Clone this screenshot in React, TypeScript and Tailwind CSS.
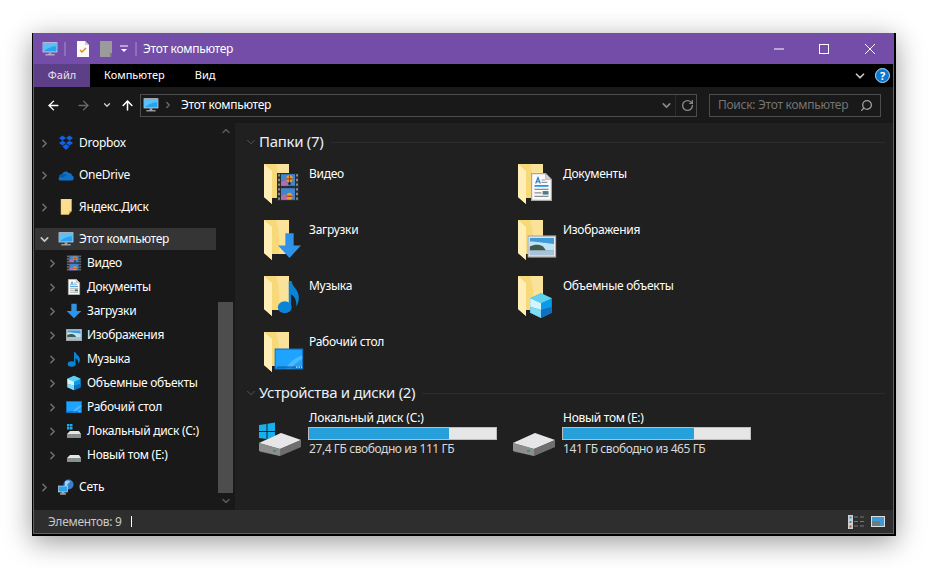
import type { ReactNode } from 'react'
import { ArrowLeft, ArrowRight, ArrowUp, ChevronDown, ChevronRight, ChevronUp, RotateCw, Search } from 'lucide-react'

type Glyph = 'film' | 'doc' | 'down' | 'pic' | 'note' | 'cube' | 'desk' | 'pc'

function glyph(name: Glyph): ReactNode {
  switch (name) {
    case 'film':
      return (
        <>
          <rect x="1" y="0" width="22" height="24" fill="#2b2b2b" />
          <path d="M2 1h2v2H2zM2 5h2v2H2zM2 9h2v2H2zM2 13h2v2H2zM2 17h2v2H2zM2 21h2v2H2zM20 1h2v2h-2zM20 5h2v2h-2zM20 9h2v2h-2zM20 13h2v2h-2zM20 17h2v2h-2zM20 21h2v2h-2z" fill="#8a8a8a" />
          <rect x="5" y="1" width="14" height="10" fill="#3f86cf" />
          <rect x="5" y="13" width="14" height="10" fill="#3f86cf" />
          <path d="M5 8l4-2 3 3v2H5zM5 20l4-2 3 3v2H5z" fill="#b56bb0" />
          <circle cx="13.5" cy="5" r="3.2" fill="#e8a020" />
          <path d="M10.5 5h6M13.5 2v6" stroke="#b3321e" strokeWidth="1" />
          <rect x="12.5" y="8" width="2" height="2" fill="#111" />
          <circle cx="13.5" cy="20" r="3" fill="#e8a020" />
          <path d="M10.5 20h6" stroke="#b3321e" strokeWidth="1" />
        </>
      )
    case 'doc':
      return (
        <>
          <path d="M3.5 0.5h12l5 5v18h-17z" fill="#fafafa" stroke="#a8a8a8" />
          <path d="M15.5 0.5v5h5z" fill="#d5d5d5" stroke="#a8a8a8" strokeWidth="0.6" />
          <path d="M7 9l2-5 2 5M8 7.5h2" stroke="#1f7ad0" strokeWidth="1" fill="none" />
          <path d="M12 6h3M12 8h5" stroke="#9a9a9a" strokeWidth="1" />
          <path d="M6 11h12" stroke="#1e96e6" strokeWidth="1.4" />
          <path d="M6 14h12M6 17h6M6 20h12" stroke="#8d8d8d" strokeWidth="1" />
          <rect x="13" y="15.5" width="5" height="3" fill="#4d7a8c" />
        </>
      )
    case 'down':
      return <path d="M8 1h8v11h7L12 23 1 12h7z" fill="#2f93e8" />
    case 'pic':
      return (
        <>
          <rect x="0.5" y="3.5" width="23" height="17" fill="#eee" stroke="#a8a8a8" />
          <rect x="2" y="5" width="20" height="14" fill="#3f9bd8" />
          <path d="M2 8c6 0 10 1 20 2v5H2z" fill="#bfe3f2" />
          <path d="M2 12c4-2 8-2 11 0l3 4H2z" fill="#3e5a4e" />
          <path d="M2 15h20v4H2z" fill="#a9c2d8" />
        </>
      )
    case 'note':
      return (
        <>
          <ellipse cx="8.5" cy="19.5" rx="6" ry="4" fill="#0a84d6" />
          <path d="M12 2h2.4c0.6 4 6.4 5.500 6.400 11 0 2.500-1 4.500-2.300 6 0.600-4-1.500-7-4.500-8v9h-2z" fill="#0a84d6" />
        </>
      )
    case 'cube':
      return (
        <>
          <path d="M12 1l10 4.500v13L12 23 2 18.500v-13z" fill="#0a9be8" />
          <path d="M12 1l10 4.500L12 10 2 5.500z" fill="#5fd0ee" />
          <path d="M2 5.500L12 10v6L2 13z" fill="#d6f4fb" />
          <path d="M2 13l10 3v7L2 18.500z" fill="#7fdcf2" />
          <path d="M12 16l10-3v5.500L12 23z" fill="#0f6fc0" />
        </>
      )
    case 'desk':
      return (
        <>
          <rect x="0.5" y="3.500" width="23" height="17" fill="#1ea4ff" stroke="#146fc0" />
          <path d="M10 20c3-6 7-9 13-11v3c-4 2-7 5-9 8z" fill="#4db8ff" />
          <path d="M2 19h20" stroke="#0e5fa8" />
          <path d="M18 19h1M20 19h1M22 19h.6" stroke="#fff" />
        </>
      )
    case 'pc':
      return (
        <>
          <rect x="1" y="2" width="22" height="15" fill="#d8eefb" />
          <rect x="2" y="3" width="20" height="13" fill="#29a3ef" />
          <path d="M2 3h20v5c-8 0-14 3-20 8z" fill="#5cc0f7" />
          <rect x="10" y="17" width="4" height="3" fill="#8fb0c4" />
          <rect x="5" y="20" width="14" height="1.500" fill="#d0d0d0" />
        </>
      )
  }
}

function Small({ name }: { name: Glyph }) {
  return (
    <svg viewBox="0 0 24 24" className="w-4 h-4 shrink-0">
      {glyph(name)}
    </svg>
  )
}

// where each overlay sits on the big folder: x, y, w, h
const overlayBox: Record<string, [number, number, number, number]> = {
  film: [12, 11, 24, 28],
  doc: [9.5, 11, 28, 28],
  down: [13, 14, 25, 27],
  pic: [9.4, 13.7, 29, 29.6],
  note: [11, 4, 27.5, 36],
  cube: [10, 18, 26, 27],
  desk: [10.4, 15, 29, 28],
}

function FolderIcon({ name }: { name: Glyph }) {
  const [x, y, w, h] = overlayBox[name]
  return (
    <svg viewBox="0 0 40 44" className="w-10 h-11 shrink-0">
      <path d="M0 2h25v34H8v6l-8-7z" fill="#f7d979" />
      <path d="M8 9L0 2v33l8 7z" fill="#ffeeb5" />
      <path d="M12 2c3 10 4 20 3 34h10V2z" fill="#fbe29a" />
      <svg x={x} y={y} width={w} height={h} viewBox="0 0 24 24" preserveAspectRatio="none">
        {glyph(name)}
      </svg>
    </svg>
  )
}

function Drive({ win }: { win?: boolean }) {
  return (
    <svg viewBox="0 0 44 34" className="w-11 h-[34px] shrink-0 mt-3">
      {win && <path d="M0 3l7.500-1v7H0zM8.500 1.800L16 0.500V9H8.500zM0 10h7.500v7L0 16zM8.500 10H16v8.500l-7.500-1.200z" fill="#16b0ee" />}
      <path d="M0 21l22-10 20 7v7L21 34 1 30z" fill="#4a4a4a" />
      <path d="M0 21l22-10 20 7-21 9z" fill="#e6e6e8" />
      <path d="M0 21l21 6v7L0 29z" fill="#8e8e8e" />
      <path d="M21 27l21-9v7L21 34z" fill="#6e6e6e" />
      <rect x="14" y="28" width="3" height="2" fill="#1ea55a" />
    </svg>
  )
}

function SmallDrive({ win }: { win?: boolean }) {
  return (
    <svg viewBox="0 0 16 16" className="w-4 h-4 shrink-0">
      {win && <path d="M1 1h2.500v2.500H1zM4 1h2.500v2.500H4zM1 4h2.500v2.500H1zM4 4h2.500v2.500H4z" fill="#16b0ee" />}
      <path d="M1 11l3-3h9l2 3v4H1z" fill="#e6e6e6" />
      <path d="M1 11h14v4H1z" fill="#8d8d8d" />
      <rect x="10" y="12.500" width="2" height="1" fill="#35d07a" />
    </svg>
  )
}

function Dropbox() {
  return (
    <svg viewBox="0 0 16 16" className="w-4 h-4 shrink-0">
      <path d="M4.500 0.500L8 3 4.500 5.500 1 3zM11.500 0.500L15 3l-3.500 2.500L8 3zM4.500 5.500L8 8 4.500 10.500 1 8zM11.500 5.500L15 8l-3.500 2.500L8 8zM4.500 11.500L8 9l3.500 2.500L8 15z" fill="#0f62e6" />
    </svg>
  )
}

function OneDrive() {
  return (
    <svg viewBox="0 0 16 16" className="w-4 h-4 shrink-0">
      <path d="M2.500 13.500C0.500 13.500 0 11 1.500 10c-0.500-2 1.500-3 2.500-2.500C5 4.500 8.500 3.500 10.500 6c2-0.500 3.500 1 3.500 2.500 1.500 0.500 2 2.500 1.500 3.500-0.300 1-1 1.500-2 1.500z" fill="#0f72c8" />
      <path d="M1.500 10c-0.500-2 1.500-3 2.500-2.500 1.500-1 4-1 5.500 1.500-2-0.500-3 0-3.500 1.500-1.500-0.500-3.500 0-4.500-0.500z" fill="#0a5aa5" />
    </svg>
  )
}

function YandexFolder() {
  return (
    <svg viewBox="0 0 16 16" className="w-4 h-4 shrink-0">
      <path d="M3 0h10.500v12L11 14.500v1H3z" fill="#fbdf8d" stroke="#e9c265" strokeWidth="0.5" />
      <path d="M11 12h2.500L11 15z" fill="#d9b45c" />
    </svg>
  )
}

function Network() {
  return (
    <svg viewBox="0 0 16 16" className="w-4 h-4 shrink-0">
      <circle cx="10.500" cy="5.500" r="5" fill="#3f7fc8" />
      <path d="M7 2.500c2-1.500 4-1 5 0-1 2-3 2-2.500 4L7 7z" fill="#9fd0f0" />
      <rect x="0.500" y="7" width="9" height="6" fill="#29a3ef" stroke="#d8eefb" strokeWidth="0.6" />
      <rect x="3.500" y="13" width="3" height="1.500" fill="#8fb0c4" />
      <rect x="2" y="14.500" width="6" height="1" fill="#ddd" />
    </svg>
  )
}

function Row({ icon, label, child, open, active, tall }: { icon: ReactNode; label: string; child?: boolean; open?: boolean; active?: boolean; tall?: boolean }) {
  const Arrow = open ? ChevronDown : ChevronRight
  return (
    <div className={`flex items-center pr-[2px] ${tall ? 'h-[32px]' : 'h-6'} ${child ? 'pl-[9px]' : 'pl-px'}`}>
      <div className={`flex items-center w-full h-[22px] ${active ? 'bg-[#353535]' : ''}`}>
        <span className="w-[23px] pl-[3px] flex shrink-0">
          <Arrow size={13} strokeWidth={3} className={open ? 'text-[#c8c8c8]' : 'text-[#6e6e6e]'} />
        </span>
        {icon}
        <span className="ml-[5px] text-[12px] text-white whitespace-nowrap">{label}</span>
      </div>
    </div>
  )
}

function Section({ title }: { title: string }) {
  return (
    <div className="flex items-center h-5">
      <ChevronDown size={14} strokeWidth={1.5} className="text-[#5a5a5a] w-[14px] -ml-px" />
      <span className="ml-px -mt-[2px] text-[15px] tracking-[-0.3px] text-[#e6f0fa] whitespace-nowrap">{title}</span>
      <div className="ml-[7px] flex-1 h-px bg-[#2c2c2c]" />
    </div>
  )
}

const folders: [string, Glyph][] = [
  ['Видео', 'film'],
  ['Документы', 'doc'],
  ['Загрузки', 'down'],
  ['Изображения', 'pic'],
  ['Музыка', 'note'],
  ['Объемные объекты', 'cube'],
  ['Рабочий стол', 'desk'],
]

export default function App() {
  return (
    <div className="w-[928px] h-[568px] bg-white pt-[33px] pl-[32px] overflow-hidden tracking-[-0.28px] font-['Noto_Sans','Open_Sans',sans-serif]">
      <div className="w-[864px] h-[503px] bg-black pl-px pr-[2px] pb-[2px] shadow-[0_6px_26px_rgba(0,0,0,0.4)]">
        <div className="h-full border border-t-0 border-[#744da9] flex flex-col">
          {/* title bar */}
          <div className="h-[31px] bg-[#744da9] flex items-center shrink-0 -mx-px pl-[9px]">
            <Small name="pc" />
            <div className="w-[2px] h-[14px] bg-[#8d70b8] ml-[6px]" />
            <svg viewBox="0 0 14 16" className="w-[14px] h-4 ml-[10px]">
              <path d="M1 0h8l4 4v12H1z" fill="#fafafa" />
              <path d="M9 0v4h4z" fill="#ccc" />
              <path d="M4 9l2 2 4-4" stroke="#e8801e" strokeWidth="1.300" fill="none" />
            </svg>
            <svg viewBox="0 0 12 16" className="w-3 h-4 ml-[10px]">
              <path d="M0 0h12v16H0z" fill="#9b9b9b" />
              <path d="M10 12h2v4h-2z" fill="#777" />
            </svg>
            <svg viewBox="0 0 8 8" className="w-2 h-2 ml-[8px]">
              <path d="M0 1h8" stroke="#fff" />
              <path d="M1 4h6L4 7z" fill="#fff" />
            </svg>
            <div className="w-[2px] h-[14px] bg-[#8d70b8] ml-[7px]" />
            <span className="ml-[6px] text-[12px] text-white">Этот компьютер</span>
            <div className="flex-1" />
            <svg viewBox="0 0 10 10" className="w-[10px] h-[10px] mr-[35px] mt-px">
              <path d="M0 5h10" stroke="#fff" />
            </svg>
            <svg viewBox="0 0 10 10" className="w-[10px] h-[10px] mr-[36px]">
              <rect x="0.500" y="0.500" width="9" height="9" fill="none" stroke="#fff" />
            </svg>
            <svg viewBox="0 0 10 10" className="w-[10px] h-[10px] mr-[19px]">
              <path d="M0 0l10 10M10 0L0 10" stroke="#fff" />
            </svg>
          </div>
          {/* ribbon tabs */}
          <div className="h-[23px] bg-black flex items-center shrink-0 text-[11px] tracking-normal text-white">
            <div className="w-[56px] h-full bg-[#5d3f88] flex items-center justify-center text-[#e8e0f2]">Файл</div>
            <span className="ml-[14px]">Компьютер</span>
            <span className="ml-[30px]">Вид</span>
            <div className="flex-1" />
            <ChevronDown size={14} strokeWidth={3} className="text-[#c8c8c8] mr-[8px]" />
            <div className="w-[15px] h-[15px] mr-[3px] rounded-full bg-[#0a78d0] border border-[#b9dcf5] flex items-center justify-center text-[11px] font-bold text-white leading-none">?</div>
          </div>
          {/* address row */}
          <div className="h-[36px] bg-[#191919] flex items-center shrink-0 pl-[12px] text-[12px]">
            <ArrowLeft size={15} strokeWidth={2.2} className="text-white shrink-0" />
            <ArrowRight size={15} strokeWidth={2.2} className="text-[#6a6a6a] ml-[15px] shrink-0" />
            <ChevronDown size={10} strokeWidth={3} className="text-[#d0d0d0] ml-[11px] shrink-0" />
            <ArrowUp size={15} strokeWidth={2.4} className="text-white ml-[8px] shrink-0" />
            <div className="w-[557px] h-[23px] ml-[5px] border border-[#4d4d4d] flex items-center pl-[2px] shrink-0">
              <Small name="pc" />
              <ChevronRight size={10} strokeWidth={3} className="text-[#6e6e6e] ml-[4px]" />
              <span className="ml-[8px] text-white">Этот компьютер</span>
              <div className="flex-1" />
              <ChevronDown size={13} strokeWidth={3} className="text-[#8a8a8a] mr-[2px]" />
              <div className="w-px h-full bg-[#2c2c2c]" />
              <RotateCw size={13} strokeWidth={2.4} className="text-[#8a8a8a] ml-[5px] mr-[2px]" />
            </div>
            <div className="w-[172px] h-[23px] ml-[12px] border border-[#4d4d4d] flex items-center pl-[8px] pr-[7px] text-[#757575] shrink-0">
              <span className="whitespace-nowrap">Поиск: Этот компьютер</span>
              <div className="flex-1" />
              <Search size={13} strokeWidth={2.4} className="text-[#a0a0a0] -scale-x-100" />
            </div>
          </div>
          {/* body */}
          <div className="flex-1 flex min-h-0">
            <div className="w-[201px] bg-[#191919] flex shrink-0">
              <div className="w-[184px] pt-1 shrink-0">
                <Row tall icon={<Dropbox />} label="Dropbox" />
                <Row tall icon={<OneDrive />} label="OneDrive" />
                <Row tall icon={<YandexFolder />} label="Яндекс.Диск" />
                <div className="h-[28px] flex items-end">
                  <div className="w-full">
                    <Row open active icon={<Small name="pc" />} label="Этот компьютер" />
                  </div>
                </div>
                {folders.map(([label, g]) => (
                  <Row key={label} child icon={<Small name={g} />} label={label} />
                ))}
                <Row child icon={<SmallDrive win />} label="Локальный диск (C:)" />
                <Row child icon={<SmallDrive />} label="Новый том (E:)" />
                <div className="h-[32px] flex items-end">
                  <div className="w-full">
                    <Row icon={<Network />} label="Сеть" />
                  </div>
                </div>
              </div>
              <div className="w-[15px] flex flex-col items-center">
                <ChevronUp size={12} strokeWidth={3} className="text-[#5a5a5a] mt-[2px]" />
                <div className="h-[165px]" />
                <div className="w-full h-[191px] bg-[#4d4d4d]" />
                <ChevronDown size={12} strokeWidth={3} className="text-[#5a5a5a] mt-[2px]" />
              </div>
            </div>
            <div className="flex-1 bg-[#202020] pt-[9px] pl-[10px] pr-[8px] text-[12px] text-white">
              <Section title="Папки (7)" />
              <div className="mt-[10px] pl-[19px] grid grid-cols-[254px_254px] gap-y-3">
                {folders.map(([label, g]) => (
                  <div key={label} className="flex h-11">
                    <FolderIcon name={g} />
                    <span className="ml-[5px] mt-[3px] leading-[18px]">{label}</span>
                  </div>
                ))}
              </div>
              <div className="mt-[9px]">
                <Section title="Устройства и диски (2)" />
              </div>
              <div className="mt-[7px] pl-[14px] flex">
                <div className="w-[254px] flex">
                  <Drive win />
                  <div className="ml-[5px] w-[189px]">
                    <div className="pl-px h-[17px] leading-[16px] tracking-[-0.12px] whitespace-nowrap">Локальный диск (C:)</div>
                    <div className="h-[13px] border border-[#bcbcbc] bg-[#e6e6e6]">
                      <div className="h-full bg-[#26a0da]" style={{ width: '75%' }} />
                    </div>
                    <div className="pl-px mt-px leading-[16px] tracking-[-0.42px] text-[#d8d8d8] whitespace-nowrap">27,4 ГБ свободно из 111 ГБ</div>
                  </div>
                </div>
                <div className="w-[254px] flex">
                  <Drive />
                  <div className="ml-[5px] w-[189px]">
                    <div className="pl-px h-[17px] leading-[16px] whitespace-nowrap">Новый том (E:)</div>
                    <div className="h-[13px] border border-[#bcbcbc] bg-[#e6e6e6]">
                      <div className="h-full bg-[#26a0da]" style={{ width: '70%' }} />
                    </div>
                    <div className="pl-px mt-px leading-[16px] tracking-[-0.42px] text-[#d8d8d8] whitespace-nowrap">141 ГБ свободно из 465 ГБ</div>
                  </div>
                </div>
              </div>
            </div>
          </div>
          {/* status bar */}
          <div className="h-[23px] bg-[#2e2e2e] flex items-center shrink-0 pl-[14px] pr-[8px] text-[12px] text-[#c8c8c8]">
            <span>Элементов: 9</span>
            <div className="w-px h-[11px] bg-white ml-[9px]" />
            <div className="flex-1" />
            <svg viewBox="0 0 16 14" className="w-4 h-[14px]">
              <rect x="0" y="0" width="5" height="14" fill="#d0d0d0" />
              <rect x="1.500" y="1.500" width="2" height="2" fill="#3a8fc8" />
              <rect x="1.500" y="6" width="2" height="2" fill="#3a8fc8" />
              <rect x="1.500" y="10.500" width="2" height="2" fill="#b4541e" />
              <path d="M6 2h4M12 2h4M6 6.500h4M12 6.500h4M6 11h4M12 11h4" stroke="#777" />
            </svg>
            <svg viewBox="0 0 14 11" className="w-[14px] h-[11px] ml-[7px]">
              <rect x="0" y="0" width="14" height="11" fill="#ddd" />
              <rect x="1" y="1" width="12" height="9" fill="#3f9bd8" />
              <path d="M1 5h8v5H1z" fill="#6a7c80" />
            </svg>
          </div>
        </div>
      </div>
    </div>
  )
}
